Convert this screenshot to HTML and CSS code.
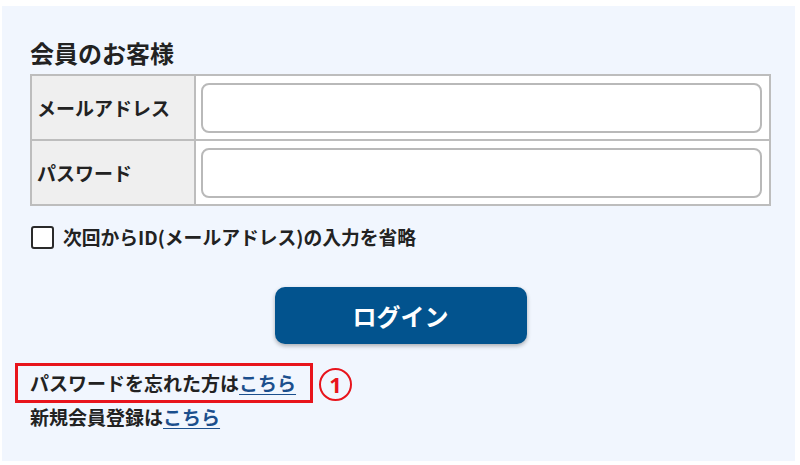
FILE: index.html
```html
<!DOCTYPE html>
<html lang="ja">
<head>
<meta charset="utf-8">
<title>ログイン</title>
<link rel="stylesheet" href="styles.css">
</head>
<body>
<div class="panel">
  <h2 class="title">会員のお客様</h2>
  <table class="form-table">
    <tr>
      <th>メールアドレス</th>
      <td><input class="field" type="text"></td>
    </tr>
    <tr>
      <th>パスワード</th>
      <td><input class="field" type="password"></td>
    </tr>
  </table>
  <label class="remember"><span class="box"></span>次回からID(メールアドレス)の入力を省略</label>
  <div class="btn-row"><button class="login">ログイン</button></div>
  <div class="links">
    <div class="link-line">
      <span class="mark">パスワードを忘れた方は<a href="#">こちら</a></span>
      <span class="num">1</span>
    </div>
    <div class="link-line second">新規会員登録は<a href="#">こちら</a></div>
  </div>
</div>
</body>
</html>
```
FILE: styles.css
```css
html, body {
  margin: 0;
  padding: 0;
  background: #ffffff;
}
body {
  font-family: "Noto Sans CJK JP", "Noto Sans", sans-serif;
  color: #222222;
}
.panel {
  margin: 6px 5px 0 2px;
  height: 455px;
  box-sizing: border-box;
  background: #f1f6fe;
  padding: 31px 24px 0 28px;
}
.title {
  margin: 0 0 5px;
  font-size: 24px;
  line-height: 32px;
  font-weight: 700;
}
.form-table {
  width: 741px;
  border-collapse: collapse;
  background: #fff;
}
.form-table th,
.form-table td {
  border: 2px solid #bdbdbd;
  height: 63px;
  padding: 0;
}
.form-table th {
  width: 157px;
  background: #efefef;
  text-align: left;
  padding-left: 5px;
  font-size: 19px;
  font-weight: 700;
}
.form-table td {
  padding: 0 7px 0 5px;
}
.field {
  display: block;
  width: 100%;
  height: 50px;
  box-sizing: border-box;
  border: 2px solid #b9b9b9;
  border-radius: 8px;
  background: #fff;
}
.remember {
  display: flex;
  align-items: center;
  margin-top: 19px;
  margin-left: 1px;
  font-size: 18.8px;
  font-weight: 700;
  line-height: 24px;
}
.box {
  width: 19px;
  height: 19px;
  border: 2px solid #2a2a2a;
  border-radius: 3px;
  background: #fff;
  margin-right: 9px;
}
.btn-row {
  display: flex;
  justify-content: center;
  margin-top: 38px;
}
.login {
  width: 252px;
  height: 57px;
  border: none;
  border-radius: 10px;
  background: #02538e;
  color: #fff;
  font-family: inherit;
  font-size: 24px;
  font-weight: 700;
  box-shadow: 0 2px 4px rgba(0, 0, 0, 0.3);
  margin-left: 0;
}
.links {
  margin-top: 19px;
  font-size: 19px;
  font-weight: 700;
  line-height: 26px;
}
.link-line {
  display: flex;
  align-items: center;
}
.link-line a {
  color: #1b4f8d;
  text-decoration: underline;
  text-underline-offset: 3px;
}
.mark {
  border: 3px solid #e8141c;
  padding: 4px 14px 4px 12px;
  margin-left: -15px;
}
.num {
  width: 29px;
  height: 29px;
  border: 2px solid #e8141c;
  border-radius: 50%;
  color: #e8141c;
  display: flex;
  align-items: center;
  justify-content: center;
  font-family: "Noto Sans", sans-serif;
  font-size: 22px;
  font-weight: 700;
  margin-left: 6px;
  margin-top: 2px;
}
.second {
  margin-top: 1px;
}
```
